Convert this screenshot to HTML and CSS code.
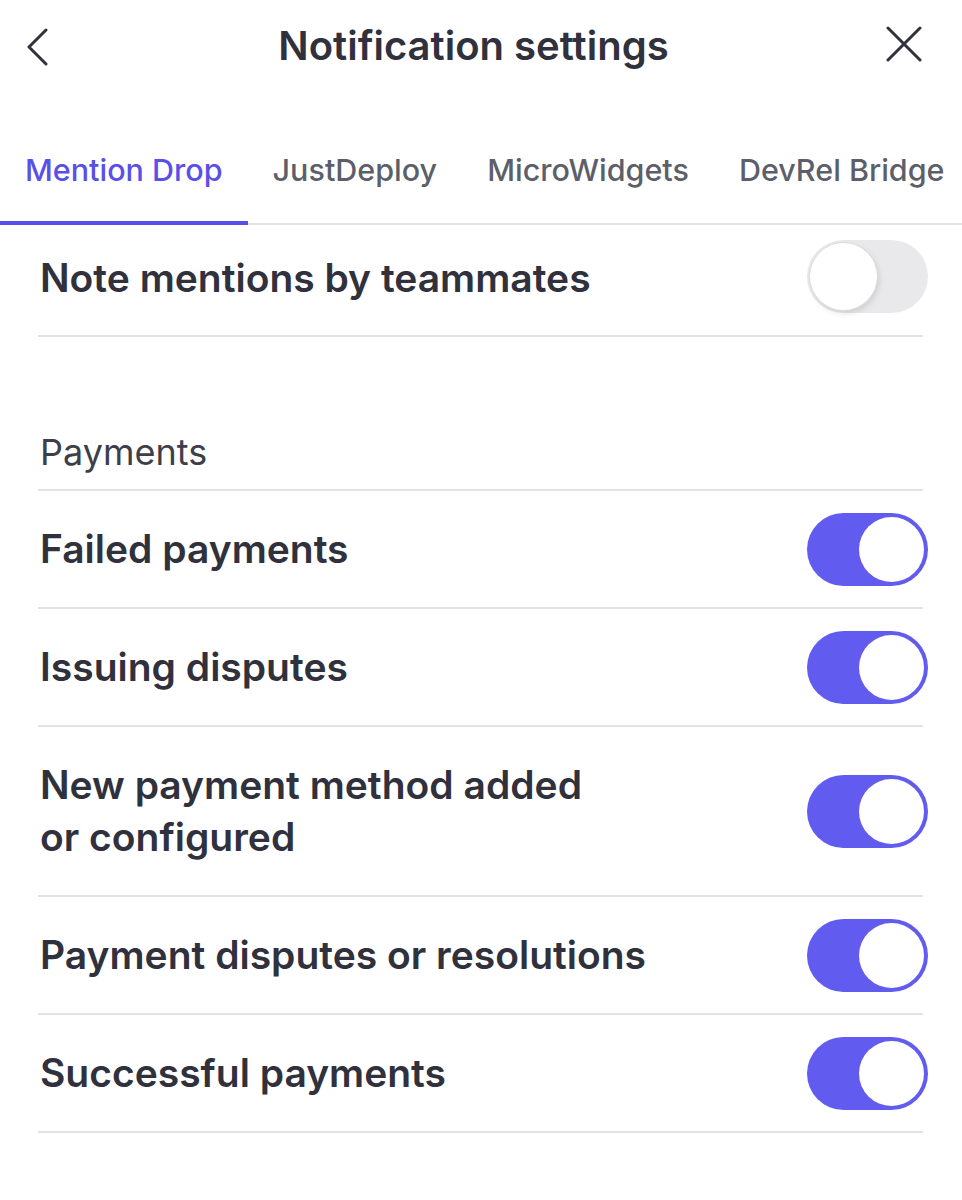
FILE: index.html
```html
<!DOCTYPE html>
<html lang="en">
<head>
    <meta charset="UTF-8">
    <meta name="viewport" content="width=device-width, initial-scale=1.0">
    <title>Notification settings</title>
    <link rel="stylesheet" href="styles.css">
</head>
<body>
    <header class="topbar">
        <button class="icon-btn back" aria-label="Back">
            <svg width="24" height="38" viewBox="0 0 24 38"><path d="M21 2 L4 19 L21 36" fill="none" stroke="#30313d" stroke-width="3" stroke-linecap="round" stroke-linejoin="round"/></svg>
        </button>
        <h1>Notification settings</h1>
        <button class="icon-btn close" aria-label="Close">
            <svg width="36" height="36" viewBox="0 0 36 36"><path d="M2 2 L34 34 M34 2 L2 34" fill="none" stroke="#30313d" stroke-width="3" stroke-linecap="round"/></svg>
        </button>
    </header>

    <nav class="tabs">
        <a href="#" class="tab active">Mention Drop</a>
        <a href="#" class="tab">JustDeploy</a>
        <a href="#" class="tab">MicroWidgets</a>
        <a href="#" class="tab">DevRel Bridge</a>
    </nav>

    <main class="settings">
        <div class="row first">
            <span class="label">Note mentions by teammates</span>
            <span class="toggle"></span>
        </div>

        <div class="section-title">Payments</div>

        <div class="row">
            <span class="label">Failed payments</span>
            <span class="toggle on"></span>
        </div>
        <div class="row">
            <span class="label">Issuing disputes</span>
            <span class="toggle on"></span>
        </div>
        <div class="row">
            <span class="label">New payment method added<br>or configured</span>
            <span class="toggle on"></span>
        </div>
        <div class="row">
            <span class="label">Payment disputes or resolutions</span>
            <span class="toggle on"></span>
        </div>
        <div class="row">
            <span class="label">Successful payments</span>
            <span class="toggle on"></span>
        </div>
    </main>
</body>
</html>
```

FILE: styles.css
```css
body {
    font-family: Inter, "Noto Sans", sans-serif;
    background-color: #fff;
    color: #30313d;
    margin: 0;
    width: 962px;
    overflow: hidden;
}

.topbar {
    height: 90px;
    display: grid;
    grid-template-columns: 1fr auto 1fr;
    align-items: center;
    padding: 0 40px 0 25px;
}

.topbar h1 {
    margin: 0;
    font-size: 40px;
    font-weight: 600;
}

.icon-btn {
    background: none;
    border: none;
    padding: 0;
    cursor: pointer;
    display: flex;
}

.back {
    justify-self: start;
    margin-top: 4px;
}

.close {
    justify-self: end;
    margin-top: -2px;
}

.tabs {
    display: flex;
    white-space: nowrap;
    box-shadow: inset 0 -2px 0 #e3e3e6;
}

.tab {
    padding: 60px 25px 31px;
    line-height: 40px;
    font-size: 30.5px;
    font-weight: 500;
    color: #5c5f6a;
    text-decoration: none;
    border-bottom: 4px solid transparent;
}

.tab.active {
    color: #5a4fe8;
    border-bottom-color: #5a4fe8;
}

.settings {
    padding: 0 39px 0 38px;
}

.row {
    display: flex;
    justify-content: space-between;
    align-items: center;
    min-height: 116px;
    border-bottom: 2px solid #e1e2e5;
}

.row.first {
    min-height: 110px;
}

.label {
    padding: 32px 0 32px 2px;
    font-size: 39px;
    line-height: 52px;
    font-weight: 600;
}

.row.first .label {
    padding: 27px 0 31px 2px;
}

.row.first .toggle {
    margin-bottom: 8px;
}

.section-title {
    margin-top: 95px;
    padding: 0 0 17px 2px;
    line-height: 40px;
    font-size: 36px;
    color: #3c3f4a;
    border-bottom: 2px solid #e1e2e5;
}

.toggle {
    position: relative;
    flex: none;
    width: 121px;
    height: 73px;
    border-radius: 37px;
    background-color: #e9e9eb;
    margin-right: -5px;
}

.toggle::after {
    content: "";
    position: absolute;
    top: 3px;
    left: 3px;
    width: 67px;
    height: 67px;
    border-radius: 50%;
    background-color: #fff;
    box-shadow: 0 0 0 1px #dcdcdf, 2px 3px 6px rgba(0, 0, 0, 0.12);
}

.toggle.on {
    background-color: #625bef;
}

.toggle.on::after {
    left: auto;
    right: 4px;
    top: 4px;
    width: 65px;
    height: 65px;
    box-shadow: none;
}
```
